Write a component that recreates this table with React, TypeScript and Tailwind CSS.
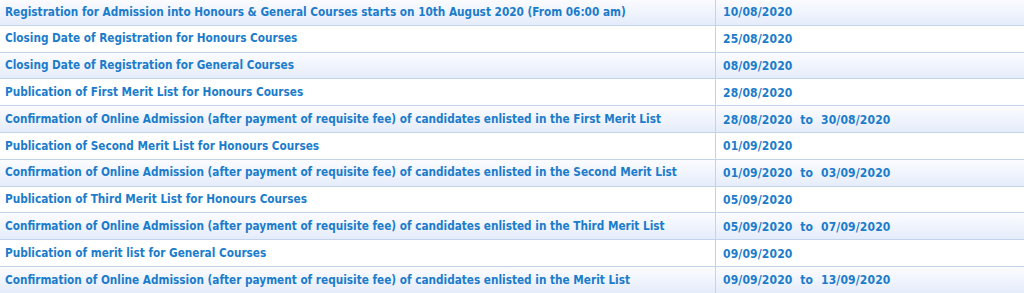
import React from 'react';

const rows: [string, string][] = [
  ['Registration for Admission into Honours & General Courses starts on 10th August 2020 (From 06:00 am)', '10/08/2020'],
  ['Closing Date of Registration for Honours Courses', '25/08/2020'],
  ['Closing Date of Registration for General Courses', '08/09/2020'],
  ['Publication of First Merit List for Honours Courses', '28/08/2020'],
  ['Confirmation of Online Admission (after payment of requisite fee) of candidates enlisted in the First Merit List', '28/08/2020  to  30/08/2020'],
  ['Publication of Second Merit List for Honours Courses', '01/09/2020'],
  ['Confirmation of Online Admission (after payment of requisite fee) of candidates enlisted in the Second Merit List', '01/09/2020  to  03/09/2020'],
  ['Publication of Third Merit List for Honours Courses', '05/09/2020'],
  ['Confirmation of Online Admission (after payment of requisite fee) of candidates enlisted in the Third Merit List', '05/09/2020  to  07/09/2020'],
  ['Publication of merit list for General Courses', '09/09/2020'],
  ['Confirmation of Online Admission (after payment of requisite fee) of candidates enlisted in the Merit List', '09/09/2020  to  13/09/2020'],
];

export default function App() {
  return (
    <div className="w-[1024px] h-[293px] overflow-hidden bg-white">
      <div className="mt-[-1px] font-['DejaVu_Sans_Condensed','DejaVu_Sans',sans-serif] font-bold text-[#1b7ccb]">
        {rows.map(([event, date], i) => (
          <div
            key={i}
            className={`flex h-[26.8px] border-b border-[#c3d4ea] ${i % 2 === 0 ? 'bg-gradient-to-b from-[#fbfcff] to-[#e5ecfa]' : 'bg-white'}`}
          >
            <div className="w-[716px] shrink-0 pl-[5px] pt-px flex items-center border-r border-[#c3d4ea] text-[11.7px]">{event}</div>
            <div className="flex-1 pl-[7px] pt-px flex items-center whitespace-pre text-[12px] tracking-[0.15px]">{date}</div>
          </div>
        ))}
      </div>
    </div>
  );
}
